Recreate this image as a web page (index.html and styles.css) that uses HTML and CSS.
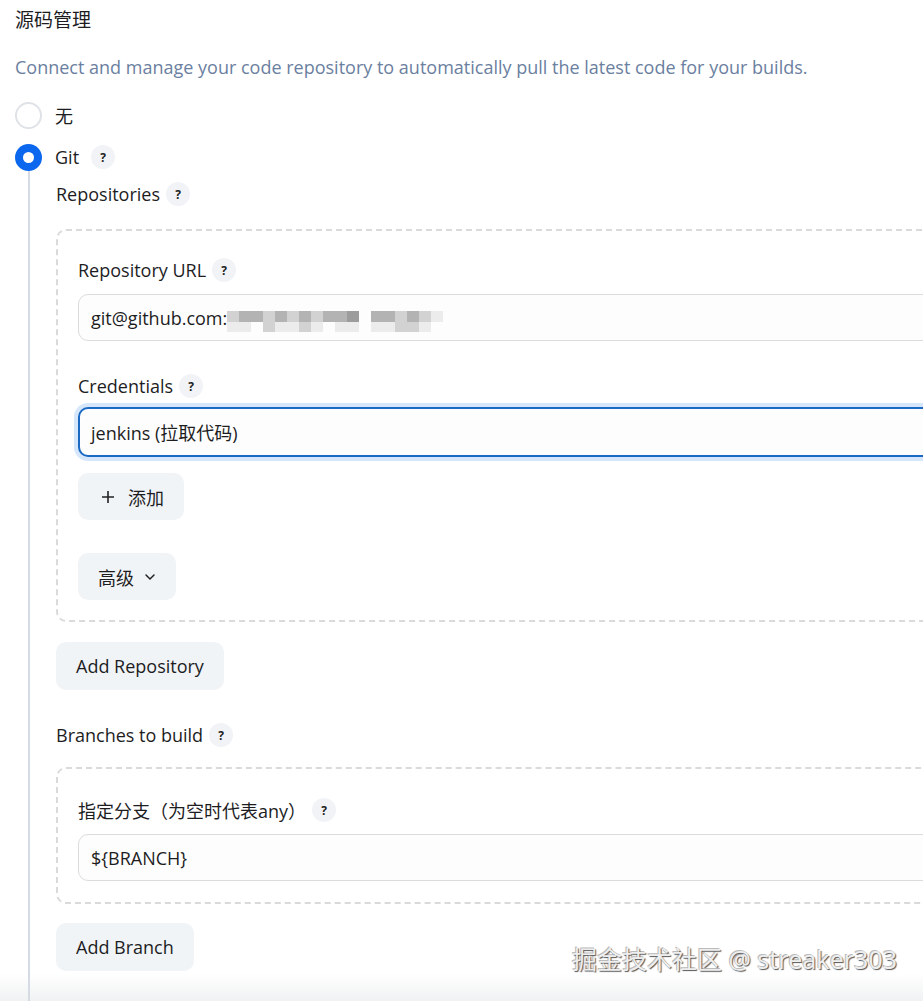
FILE: index.html
```html
<!DOCTYPE html>
<html lang="zh-CN">
<head>
  <meta charset="UTF-8">
  <title>源码管理</title>
  <meta name="viewport" content="width=device-width, initial-scale=1">
  <link rel="stylesheet" href="styles.css">
</head>
<body>

  <div class="scm">
    <h2 class="scm-title">源码管理</h2>
    <p class="scm-desc">Connect and manage your code repository to automatically pull the latest code for your builds.</p>

    <label class="radio-row first">
      <span class="radio"></span>
      <span>无</span>
    </label>

    <label class="radio-row">
      <span class="radio checked"></span>
      <span>Git</span>
      <span class="help">?</span>
    </label>

    <div class="git-section">
      <div class="field-label">Repositories <span class="help">?</span></div>

      <div class="repeat-box">
        <div class="field-label">Repository URL <span class="help">?</span></div>
        <div class="input url-input">git@github.com:<span class="mosaic">
          <b class="s2"></b><b class="s3"></b><b class="s3"></b><b class="s2"></b><b class="s3"></b><b class="s2"></b><b class="s3"></b><b class="s2"></b><b class="s3"></b><b class="s3"></b><b class="s4"></b><b class="s0"></b><b class="s3"></b><b class="s3"></b><b class="s2"></b><b class="s3"></b><b class="s2"></b><b class="s1"></b>
          <b class="s1"></b><b class="s1"></b><b class="s0"></b><b class="s2"></b><b class="s1"></b><b class="s1"></b><b class="s2"></b><b class="s1"></b><b class="s0"></b><b class="s1"></b><b class="s1"></b><b class="s0"></b><b class="s1"></b><b class="s1"></b><b class="s2"></b><b class="s2"></b><b class="s1"></b><b class="s0"></b>
        </span></div>

        <div class="field-label">Credentials <span class="help">?</span></div>
        <div class="input focused">jenkins (拉取代码)</div>

        <button class="btn btn-add">
          <svg width="14" height="14" viewBox="0 0 14 14"><path d="M7 1v12M1 7h12" stroke="#222" stroke-width="1.6" fill="none"/></svg>
          添加
        </button>

        <button class="btn btn-adv">
          高级
          <svg width="12" height="8" viewBox="0 0 12 8"><path d="M2 2l4 4 4-4" stroke="#222" stroke-width="1.5" fill="none" stroke-linecap="round"/></svg>
        </button>
      </div>

      <button class="btn btn-outer">Add Repository</button>

      <div class="field-label">Branches to build <span class="help">?</span></div>

      <div class="repeat-box branch-box">
        <div class="field-label">指定分支（为空时代表any） <span class="help">?</span></div>
        <div class="input">${BRANCH}</div>
      </div>

      <button class="btn btn-outer">Add Branch</button>
    </div>
  </div>

  <div class="watermark">掘金技术社区 @ streaker303</div>

</body>
</html>
```

FILE: styles.css
```css
* {
  box-sizing: border-box;
}

body {
  margin: 0;
  font-family: "Open Sans", "Noto Sans CJK SC", sans-serif;
  font-size: 18px;
  color: #1d1d1f;
  background: #fff;
  overflow: hidden;
  height: 1001px;
  position: relative;
}

.scm {
  padding: 4px 0 0 15px;
  width: 1000px;
}

.scm-title {
  font-size: 19px;
  font-weight: 400;
  margin: 0;
  line-height: 32px;
}

.scm-desc {
  color: #6b7fa0;
  margin: 18px 0 0;
  line-height: 26px;
}

.radio-row {
  display: flex;
  align-items: center;
  gap: 13px;
  height: 28px;
  margin-top: 14px;
}

.radio-row.first {
  margin-top: 21px;
}

.radio {
  width: 27px;
  height: 27px;
  border-radius: 50%;
  border: 2px solid #dfe2e6;
  background: #fff;
}

.radio.checked {
  border: none;
  background: #0b68ee;
  display: flex;
  align-items: center;
  justify-content: center;
}

.radio.checked::after {
  content: "";
  width: 11px;
  height: 11px;
  border-radius: 50%;
  background: #fff;
}

.help {
  display: inline-flex;
  align-items: center;
  justify-content: center;
  width: 24px;
  height: 24px;
  border-radius: 50%;
  background: #f1f3f6;
  font-size: 12px;
  font-weight: 700;
  color: #222;
  margin-left: 6px;
}

.radio-row .help {
  margin-left: -1px;
}

.git-section {
  margin-left: 13px;
  border-left: 2px solid #d6dae2;
  padding: 8px 0 40px 26px;
}

.field-label {
  display: flex;
  align-items: center;
  height: 30px;
}

.repeat-box {
  margin-top: 20px;
  border: 2px dashed #dadada;
  border-radius: 10px;
  padding: 24px 0 20px 20px;
}

.input {
  height: 47px;
  border: 1px solid #dcdcdc;
  border-radius: 10px;
  background: #fdfdfd;
  display: flex;
  align-items: center;
  padding-left: 12px;
  margin-top: 9px;
  margin-bottom: 30px;
}

.repeat-box .input.focused {
  height: 50px;
  margin-top: 6px;
  border: 2px solid #1a6ac4;
  box-shadow: 0 0 0 4px #d7e7fb;
  padding-left: 11px;
  margin-bottom: 16px;
}

.mosaic {
  display: grid;
  grid-template-columns: repeat(18, 12px);
  grid-template-rows: 11px 10px;
  margin-top: 8px;
}

.mosaic .s0 { background: transparent; }
.mosaic .s1 { background: #ececec; }
.mosaic .s2 { background: #d2d2d2; }
.mosaic .s3 { background: #b3b3b3; }
.mosaic .s4 { background: #9c9c9c; }

.btn {
  display: flex;
  align-items: center;
  gap: 13px;
  border: none;
  background: #f1f4f7;
  border-radius: 10px;
  font-family: inherit;
  font-size: 18px;
  color: #1d1d1f;
  height: 47px;
  padding: 0 20px;
  cursor: pointer;
}

.btn-add {
  padding: 0 20px 0 23px;
}

.btn-adv {
  margin-top: 33px;
  gap: 10px;
}

.btn-outer {
  margin-top: 20px;
  height: 48px;
  margin-bottom: 30px;
}

.branch-box {
  margin-top: 17px;
  padding: 26px 0 21px 20px;
}

.branch-box .input {
  margin-top: 9px;
  margin-bottom: 0;
}

.branch-box + .btn-outer {
  margin-top: 19px;
}

.watermark {
  position: absolute;
  right: 26px;
  bottom: 25px;
  font-size: 25px;
  color: #eeeeee;
  text-shadow: 1px 1px 1px #555, -1px -1px 0 #bbb;
  font-family: "Noto Sans", "Noto Sans CJK SC", sans-serif;
}

body::after {
  content: "";
  position: absolute;
  left: 0;
  right: 0;
  bottom: 0;
  height: 28px;
  background: linear-gradient(#fff, #f0f1f2);
  z-index: -1;
}
```
